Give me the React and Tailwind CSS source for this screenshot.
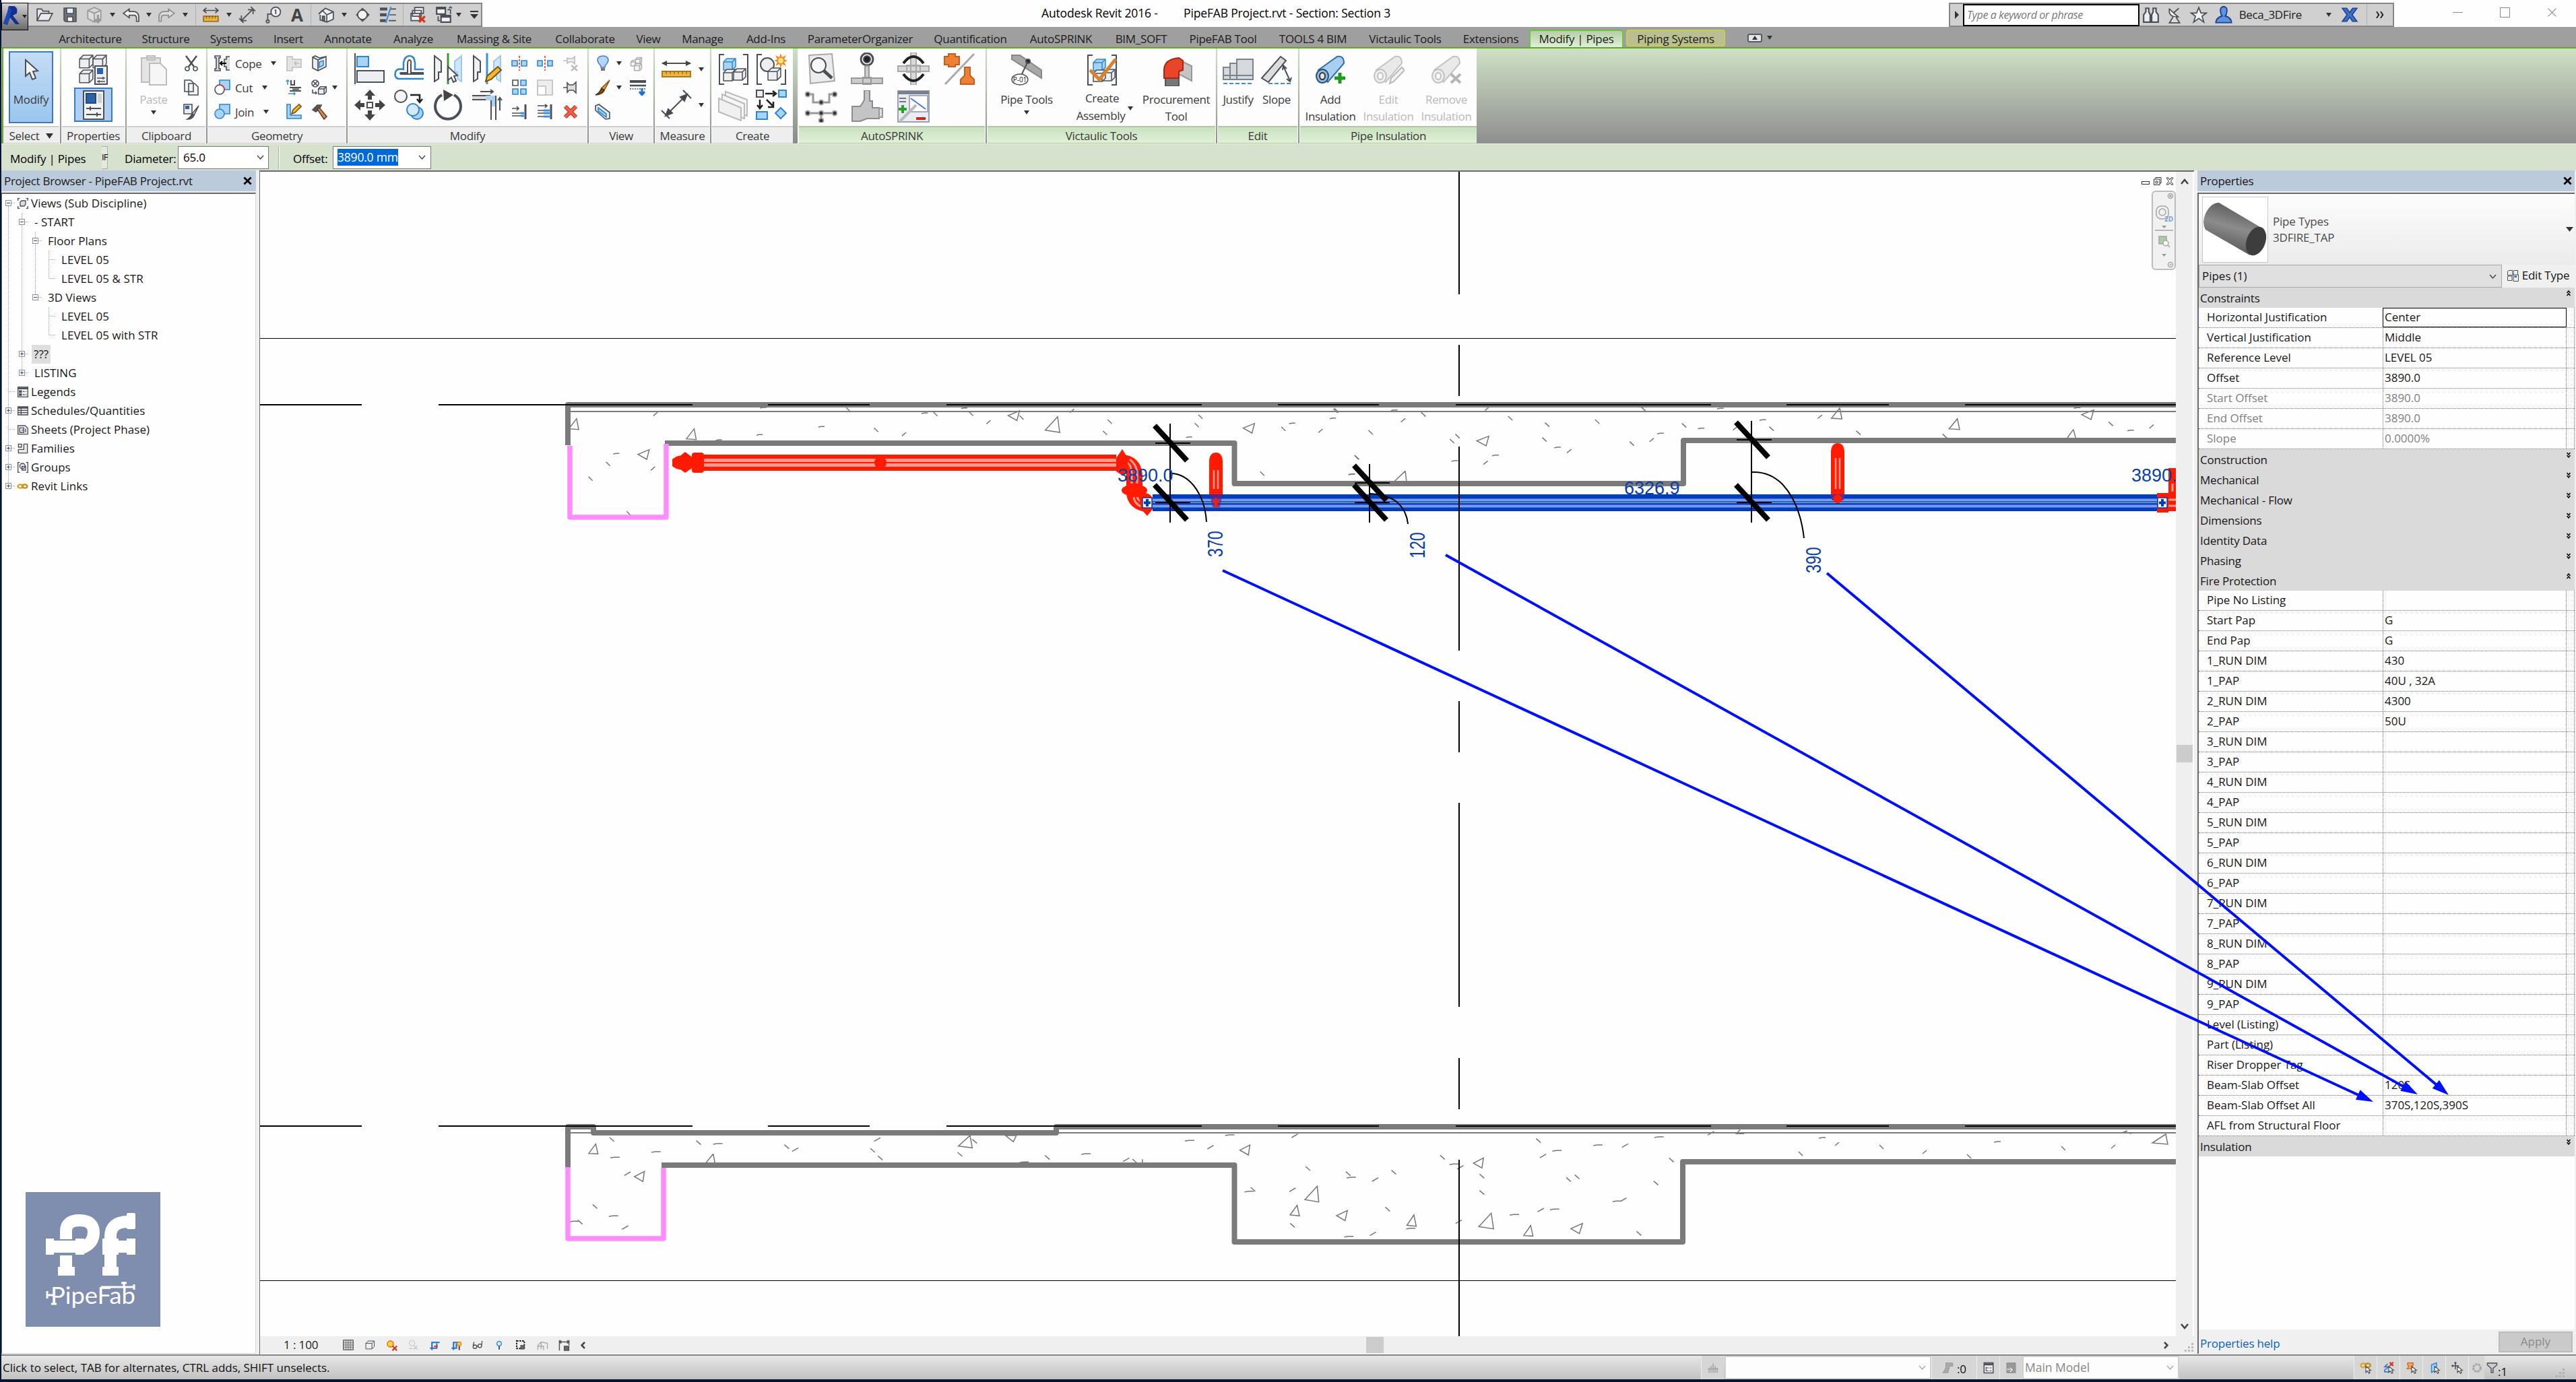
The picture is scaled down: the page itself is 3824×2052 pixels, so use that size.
import React from "react";

const D = "#4b4f57";
const B = "#2f86cf";
const LB = "#a9d3f5";

/* ---------- small helpers ---------- */
function Svg({ s = 24, w, h, vb, children }) {
  return (
    <svg width={w || s} height={h || s} viewBox={vb || "0 0 24 24"} fill="none" stroke={D} strokeWidth="1.6" className="shrink-0">
      {children}
    </svg>
  );
}
const Big = ({ children, s = 48, vb = "0 0 48 48" }) => (
  <svg width={s} height={s} viewBox={vb} fill="none" stroke={D} strokeWidth="2" className="shrink-0">
    {children}
  </svg>
);
const Arrow = ({ className = "" }) => (
  <svg width="8" height="6" viewBox="0 0 8 6" className={"shrink-0 " + className}>
    <path d="M0 0H8L4 6Z" fill="#333" />
  </svg>
);
const Chevron = ({ color = "#444" }) => (
  <svg width="11" height="7" viewBox="0 0 11 7" fill="none" stroke={color} strokeWidth="1.4" className="shrink-0">
    <path d="M1 1L5.500 6L10 1" />
  </svg>
);
const Close = ({ s = 14, color = "#000", sw = 3 }) => (
  <svg width={s} height={s} viewBox="0 0 14 14" stroke={color} strokeWidth={sw} className="shrink-0">
    <path d="M1.500 1.500L12.500 12.500M12.500 1.500L1.500 12.500" />
  </svg>
);
const Cube = ({ x = 0, y = 0, f = "#eceef1", c = D, k = 1 }) => (
  <g transform={`translate(${x} ${y}) scale(${k})`} fill={f} stroke={c} strokeWidth={1.5 / k} strokeLinejoin="round">
    <path d="M1 6L6 1H19V13L14 18H1Z" />
    <path d="M1 6H14V18M14 6L19 1" fill="none" />
  </g>
);

/* ---------- title bar ---------- */
const Q = ({ w, children }) => <div className={"flex h-full shrink-0 items-center justify-center " + w}>{children}</div>;
const Sep = () => <div className="h-full w-px shrink-0 bg-[#b2b2b2]" />;

function QuickAccess() {
  return (
    <div className="mt-1 flex h-[36px] w-[674px] items-center border-2 border-l-0 border-[#868686] bg-[#d0d0d0]">
      <Q w="w-[48px]"><Svg s={26}><path d="M2 20V4H8L10 7H18V10M2 20L7 10H23L18 20Z" fill="#e8eaed" /></Svg></Q>
      <Q w="w-[28px]"><Svg s={24}><path d="M3 2H21V22H5L3 20Z" fill="#6d727b" /><path d="M7 2H17V10H7Z" fill="#e9f1fa" /><path d="M8 15H16V22H8Z" fill="#fff" /></Svg></Q>
      <Q w="w-[44px]"><Svg s={26}><path d="M12 2L21 6V17L12 22L3 17V6Z M3 6L12 10L21 6M12 10V22" stroke="#999" fill="#dcdcdc" /><path d="M17 12V22M13 18L17 22L21 18" stroke="#999" strokeWidth="3" /></Svg></Q>
      <Q w="w-[10px]"><Arrow /></Q>
      <Q w="w-[44px]"><Svg s={26}><path d="M10 4L2 10L10 16V12.500H17Q20 13 20 17V21H23V14Q22 7.500 16 7.500H10Z" fill="#f2f2f2" /></Svg></Q>
      <Q w="w-[10px]"><Arrow /></Q>
      <Q w="w-[44px]"><Svg s={26}><path d="M14 4L22 10L14 16V12.500H7Q4 13 4 17V21H1V14Q2 7.500 8 7.500H14Z" fill="#ddd" stroke="#8c8c8c" /></Svg></Q>
      <Q w="w-[10px]"><Arrow /></Q>
      <Q w="w-[10px]" /><Sep />
      <Q w="w-[44px]"><Svg s={26}><path d="M2 6H22M6 2.500L2 6L6 9.500M18 2.500L22 6L18 9.500" /><path d="M2 14H22V21H2Z" fill="#e9b23c" stroke="#9a6a10" /><path d="M6 14V17M10 14V17M14 14V17M18 14V17" stroke="#7a5010" strokeWidth="1" /></Svg></Q>
      <Q w="w-[10px]"><Arrow /></Q>
      <Q w="w-[44px]"><Svg s={26}><path d="M4 20L20 4M13 5H20M20 4V11M4 13V20H11M1 17L7 23M17 1L23 7" /></Svg></Q>
      <Q w="w-[32px]"><Svg s={26}><circle cx="16" cy="8" r="6.500" fill="#f3f3f3" /><path d="M16 5V11M14.500 6L16 5M10 11H5V20" /><circle cx="5" cy="21" r="2" /></Svg></Q>
      <Q w="w-[40px]"><span className="text-[26px] font-bold leading-none text-[#444]">A</span></Q>
      <Sep />
      <Q w="w-[44px]"><Svg s={26}><path d="M2 11L11 3L22 8V18L13 22L4 19V12" fill="#eceef1" /><path d="M2 11L7 6L13 12V22M13 12L22 8" /><path d="M7 14H10V20.500L7 19.500Z" fill="#6d727b" /></Svg></Q>
      <Q w="w-[10px]"><Arrow /></Q>
      <Q w="w-[44px]"><Svg s={26}><path d="M3 12L12 2V22Z M12 2L22 12L12 22Z" fill="#555" stroke="none" /><circle cx="12" cy="12" r="6.500" fill="#f3f3f3" /></Svg></Q>
      <Q w="w-[32px]"><Svg s={26}><path d="M1 4H11M1 12H10M1 20H9" strokeWidth="4" /><path d="M15 4H23M14 12H23M13 20H23" strokeWidth="1.500" /><path d="M16 1L9 23" stroke="#3b8fe0" strokeWidth="2" /></Svg></Q>
      <Q w="w-[6px]" /><Sep />
      <Q w="w-[44px]"><Svg s={26}><path d="M7 2H19V10H7Z M4 6H16V14H4Z M2 10H14V20H2Z" fill="#eee" /><path d="M13 14L21 22M21 14L13 22" stroke="#d9331c" strokeWidth="3" /></Svg></Q>
      <Q w="w-[32px]"><Svg s={26}><path d="M2 2H14V11H2Z M8 13H21V22H8Z M2 3.500H14M8 15H21" fill="#f3f3f3" strokeWidth="2" /><path d="M17 5H21V11M4 14V20H7M19 3L21 1L23 3" /></Svg></Q>
      <Q w="w-[12px]"><Arrow /></Q>
      <Q w="w-[34px]"><svg width="14" height="12" viewBox="0 0 14 12"><path d="M1 0H13V2H1Z M1 5H13L7 12Z" fill="#333" /></svg></Q>
    </div>
  );
}

function TitleBar() {
  return (
    <div className="flex h-[40px] shrink-0 items-start bg-[#fefefe]">
      <div className="z-10 mt-1 flex h-[41px] w-[40px] shrink-0 items-center border border-black bg-linear-to-b from-[#d2d2d2] to-[#6c6c6c]">
        <svg width="38" height="38" viewBox="0 0 38 38">
          <path d="M10 3H18Q24 5 22 14L16 17L26 30H20L12 20L8 31L2 29L8 12Z" fill="#12308f" />
          <path d="M10 3L14 10L8 31L2 29L8 12Z" fill="#1d48bd" />
          <path d="M30 16H37L33.500 21Z" fill="#222" />
        </svg>
      </div>
      <QuickAccess />
      <div className="ml-[830px] flex h-[38px] w-[1347px] items-center text-[17.500px] tracking-[-0.15px] whitespace-pre text-black">
        <span className="w-[211px]">Autodesk Revit 2016 -</span>
        <span>PipeFAB Project.rvt - Section: Section 3</span>
      </div>
      <div className="mt-1 flex h-[36px] w-[661px] items-center border-2 border-[#868686] bg-[#d0d0d0]">
        <Q w="w-[19px]"><svg width="6" height="12"><path d="M0 0L6 6L0 12Z" fill="#333" /></svg></Q>
        <div className="flex h-[33px] w-[270px] items-center border-[2.500px] border-black bg-white pl-1 text-[16px] tracking-[-0.4px] text-[#777] italic">Type a keyword or phrase</div>
        <Q w="w-[35px]"><Svg s={26}><path d="M5 3H9V8L11 12V22H2V12L5 8Z M15 3H19V8L22 12V22H13V12L15 8Z M11 12H13" fill="#eceef1" strokeWidth="2" /></Svg></Q>
        <Q w="w-[35px]"><Svg s={26}><path d="M5 4Q3 15 17 15Z" fill="#f3f3f3" /><path d="M11 9L18 3M10 15L5 23H19L14 15" fill="#ddd" /></Svg></Q>
        <Q w="w-[36px]"><Svg s={26}><path d="M12 2L15 9.500H22.500L16.500 14L19 22L12 17L5 22L7.500 14L1.500 9.500H9Z" fill="#f3f3f3" /></Svg></Q>
        <Q w="w-[38px]"><Svg s={28}><path d="M12 1.500Q17 2 16 8Q15.500 12 14 13.500Q22 16 22 22H2Q2 16 10 13.500Q8.500 12 8 8Q7 2 12 1.500Z" fill="#5b93e8" stroke="#23407f" /></Svg></Q>
        <span className="w-[98px] pl-1 text-[17px] tracking-[-0.35px] text-[#222]">Beca_3DFire</span>
        <Q w="w-[64px]"><Arrow className="ml-4" /></Q>
        <Q w="w-[14px]"><Svg s={26}><path d="M2 3H8L12 9L16 3H22L15.500 12L22 21H16L12 15L8 21H2L8.500 12Z" fill="#3c6fd0" stroke="#24478f" /></Svg></Q>
        <Q w="w-[18px]" /><Sep />
        <Q w="w-[38px]"><svg width="12" height="10"><path d="M0 0H2L5.500 5L2 10H0L3 5Z M6 0H8L11.500 5L8 10H6L9 5Z" fill="#222" /></svg></Q>
      </div>
      <div className="ml-[87px] flex h-[36px] items-center gap-[55px]">
        <div className="h-px w-[15px] bg-[#888]" />
        <div className="h-[15px] w-[15px] border border-[#888]" />
        <Close s={15} color="#888" sw={1} />
      </div>
    </div>
  );
}

/* ---------- tabs ---------- */
const TABS = [
  ["Architecture", "w-[94px]"], ["Structure", "w-[70px]"], ["Systems", "w-[65px]"], ["Insert", "w-[44px]"], ["Annotate", "w-[73px]"],
  ["Analyze", "w-[61px]"], ["Massing & Site", "w-[119px]"], ["Collaborate", "w-[91px]"], ["View", "w-[37px]"], ["Manage", "w-[64px]"],
  ["Add-Ins", "w-[64px]"], ["ParameterOrganizer", "w-[156px]"], ["Quantification", "w-[111px]"], ["AutoSPRINK", "w-[98px]"],
  ["BIM_SOFT", "w-[80px]"], ["PipeFAB Tool", "w-[103px]"], ["TOOLS 4 BIM", "w-[104px]"], ["Victaulic Tools", "w-[110px]"], ["Extensions", "w-[84px]"],
];
function Tabs() {
  return (
    <div className="flex h-[32px] shrink-0 items-end border-b-2 border-[#5cab27] bg-[#9f9f9f] pl-[85px] text-[17px] tracking-[-0.3px] text-[#1c1c1c]">
      <div className="flex h-[26px] items-center gap-[30px] pt-[2px]">
        {TABS.map(([t, w]) => <div key={t} className={"flex shrink-0 justify-center whitespace-nowrap " + w}>{t}</div>)}
      </div>
      <div className="ml-[15px] flex h-[26px] w-[140px] items-center justify-center rounded-t-sm border-2 border-b-0 border-[#6fbf4a] bg-linear-to-b from-[#b4cfa5] to-[#dff0d6] whitespace-nowrap">Modify | Pipes</div>
      <div className="ml-[4px] mb-px flex h-[25px] w-[147px] items-center justify-center rounded-sm border-2 border-[#c9cd58] bg-[#b9bf8f] pt-[2px] whitespace-nowrap">Piping Systems</div>
      <div className="ml-[33px] flex h-[28px] items-center gap-[7px]">
        <div className="flex h-[13px] w-[22px] items-center justify-center rounded-[3px] border-2 border-[#555b66] bg-[#e6e6e6]"><svg width="8" height="6"><path d="M0 6H8L4 0Z" fill="#333" /></svg></div>
        <Arrow />
      </div>
    </div>
  );
}

/* ---------- ribbon ---------- */
function Panel({ w, title, green, last, children, arrow }) {
  return (
    <>
      <div className={"flex h-full shrink-0 flex-col bg-[#fdfdfd] " + w}>
        <div className="flex h-[115px] pt-1">{children}</div>
        <div className={"flex h-[26px] items-center justify-center gap-[10px] border-t-2 border-b pt-[2px] text-[17px] tracking-[-0.35px] text-[#3a3a3a] " + (green ? "border-[#b3c9a6] bg-linear-to-b from-[#cbe0c0] to-[#dff1d6]" : "border-[#cfcfcf] bg-[#eeeeee]")}>
          {title}
          {arrow && <svg width="11" height="8"><path d="M0 0H11L5.500 8Z" fill="#333" /></svg>}
        </div>
      </div>
      {!last && <div className="flex h-full w-[4px] shrink-0 justify-center bg-[#f5f8f3]"><div className="h-full w-[2px] bg-linear-to-b from-[#cfe0c5] to-[#8f8f8f]" /></div>}
    </>
  );
}
const Col = ({ w, children }) => <div className={"flex shrink-0 flex-col items-center " + w}>{children}</div>;
const S = ({ children }) => <div className="flex h-[36px] shrink-0 items-center justify-center">{children}</div>;
const L = ({ children }) => <div className="flex h-[53px] shrink-0 items-center justify-center">{children}</div>;
const Txt = ({ children, dim }) => <div className={"h-[25px] text-center text-[17px] leading-[25px] tracking-[-0.35px] whitespace-nowrap " + (dim ? "text-[#b9b9b9]" : "text-[#3a3a3a]")}>{children}</div>;

const Mirror = ({ pick }) => (
  <Big><path d="M4 4L14 12V28H10V38L4 42Z" fill="#f0f0f0" /><path d="M44 4L34 12V28H38V38L44 42Z" fill="#cfe6f8" stroke="#9cc8ea" /><path d="M24 0V46" stroke={pick ? "#3a9a2f" : "#3b8fe0"} strokeWidth="3" />{pick ? <path d="M24 20V40L29 36L32 43L36 41L33 34L38 33Z" fill="#fff" /> : <path d="M22 42L24 34L40 20L45 25L30 39Z" fill="#f5b833" stroke="#7a5010" />}</Big>
);
const Roll = ({ dim, children }) => (
  <Big>
    <path d="M6 24L34 4Q44 2 44 14L20 42Z" fill={dim ? "#e9e9e9" : "#a9cff0"} stroke={dim ? "#c2c2c2" : "#2f6ea8"} />
    <ellipse cx="12" cy="33" rx="9" ry="10" fill={dim ? "#eee" : "#8fb9df"} stroke={dim ? "#c2c2c2" : "#2c4f78"} />
    <ellipse cx="12" cy="33" rx="4" ry="5" fill={dim ? "#f8f8f8" : "#e8e8e8"} stroke={dim ? "#c2c2c2" : "#333"} />
    {children}
  </Big>
);

function Ribbon() {
  return (
    <div className="flex h-[142px] shrink-0 items-start border-b border-[#e8eee4] bg-linear-to-b from-[#cfe1c5] to-[#8f8f8f] pl-px">
      <div className="h-[141px] w-[2px] shrink-0 bg-[#5cab27]" />
      <div className="flex h-[141px]">
        <Panel w="w-[83px]" title="Select" arrow>
          <div className="ml-[8px] flex h-[107px] w-[66px] flex-col items-center border-2 border-[#3c79c4] bg-linear-to-b from-[#c4dcf5] to-[#9cc6ef] pt-2">
            <Big s={36} vb="0 0 36 36"><path d="M10 3V27L16 22L20 32L25 30L21 20L28 19Z" fill="#f4f4f4" /></Big>
            <div className="mt-[13px]"><Txt>Modify</Txt></div>
          </div>
        </Panel>
        <Panel w="w-[93px]" title="Properties">
          <Col w="w-full">
            <L><Big><Cube x={2} y={2} k={1.1} /><Cube x={22} y={2} k={1.1} /><Cube x={2} y={24} k={1.1} /><path d="M26 19H44V46H26Z" fill="#eceef1" /><path d="M29 22H38V31H29Z" fill="#2d62ab" stroke="none" /><path d="M29 37H41M29 42H41M38 35V39M32 40V44" strokeWidth="1.500" /></Big></L>
            <div className="mt-[1px] flex h-[51px] w-[57px] items-center justify-center border-2 border-[#3c79c4] bg-[#aecff2]">
              <svg width="34" height="46" viewBox="0 0 34 46" fill="none" stroke={D} strokeWidth="2"><path d="M2 2H32V44H2Z" fill="#f3f3f3" /><path d="M6 6H20V20H6Z" fill="#2d62ab" stroke="#1f4a86" /><path d="M23 6H29V20H23Z" fill="#cfd3d8" stroke="none" /><path d="M6 28H28M6 37H28M12 25V31M22 34V40" /></svg>
            </div>
          </Col>
        </Panel>
        <Panel w="w-[116px]" title="Clipboard">
          <Col w="w-[78px]">
            <div className="mt-1"><Big><path d="M6 6H34V42H6Z M14 3H26V9H14Z" fill="#e4e4e4" stroke="#bdbdbd" /><path d="M18 14H34L43 23V46H18Z" fill="#f6f6f6" stroke="#bdbdbd" /></Big></div>
            <div className="mt-[7px]"><Txt dim>Paste</Txt></div>
            <Arrow className="mt-1" />
          </Col>
          <Col w="w-[34px]">
            <S><Svg><path d="M4 1L16 17M20 1L8 17" strokeWidth="2.500" /><circle cx="6" cy="20" r="3" /><circle cx="18" cy="20" r="3" /></Svg></S>
            <S><Svg><path d="M2 1H11L15 5V18H2Z M8 6H17L22 11V23H8Z" fill="#f3f3f3" /></Svg></S>
            <S><Svg><path d="M1 1H13V15H1Z" fill="#eceef1" /><path d="M3 3H9V8H3Z" fill="#2d62ab" stroke="none" /><path d="M23 3L13 15L16 17Z" fill="#ddd" /><path d="M13 15L16 17Q14 23 6 23Q11 20 13 15Z" fill="#555" /></Svg></S>
          </Col>
        </Panel>
        <Panel w="w-[204px]" title="Geometry">
          <div className="flex w-[108px] flex-col pl-[9px]">
            {[["Cope", <Svg key="a"><path d="M1 1H9V4H7V20H9V23H1V20H3V4H1Z M23 2H18V6H15V17H18V22H23" fill="#ddd" /><path d="M18 12H9M12 9L9 12L12 15" stroke="#000" strokeWidth="2.200" /></Svg>],
              ["Cut", <Svg key="b"><path d="M8 1H23V15H8Z" fill={LB} stroke={B} /><circle cx="8" cy="15" r="7" fill="#fff" /><path d="M8 8Q15 9 15 15" stroke="#e8321c" /></Svg>],
              ["Join", <Svg key="c"><path d="M8 1H23V15H8Z" fill={LB} stroke={B} /><circle cx="8" cy="15" r="7" fill={LB} stroke={B} /></Svg>]].map(([t, i]) => (
              <div key={t} className="flex h-[36px] shrink-0 items-center gap-[7px]">{i}<Txt>{t}</Txt><Arrow className="ml-[7px]" /></div>
            ))}
          </div>
          <Col w="w-[38px]">
            <S><Svg><path d="M2 2H10V6H23V18H10V23H2Z M13 12H20M13 12L16 9M13 12L16 15" fill="#e4e4e4" stroke="#bdbdbd" /></Svg></S>
            <S><Svg><path d="M3 1V8M0.500 3L3 1L5.500 3" stroke="#3b8fe0" /><path d="M8 1V8H13V1M6 12H23M6 17H23M10 14.500H20" strokeWidth="2" /><path d="M4 21H14M12 19L14 21L12 23" stroke="#3b8fe0" /></Svg></S>
            <S><Svg><path d="M2 1V22H23V17H7V1Z" fill={LB} stroke={B} /><path d="M9 15L11 9L20 1L23 4L14 13Z" fill="#f5b833" stroke="#7a5010" /></Svg></S>
          </Col>
          <Col w="w-[38px]">
            <S><Svg><path d="M2 3L6 1L12 4L22 2V17L10 23L2 19Z" fill="#eceef1" /><path d="M2 3L10 7V23M10 7L22 2" /><path d="M12 10L18 8V15L12 18Z" fill={LB} stroke={B} /></Svg></S>
            <S><Svg><circle cx="6" cy="6" r="5" /><path d="M2.500 2.500L9.500 9.500M9.500 2.500L2.500 9.500M2 15V20H8M6 18L8 20L6 22" /><Cube x={10} y={10} k={0.65} /></Svg></S>
            <S><Svg><path d="M2 9L9 2H15L12 8L7 12Z" fill="#555" /><path d="M9 8L12 6L23 19L19 23Z" fill="#c98b5a" stroke="#6b4020" /></Svg></S>
          </Col>
          <div className="flex h-[72px] w-[16px] items-end pb-[15px]"><Arrow /></div>
        </Panel>
        <Panel w="w-[354px]" title="Modify">
          <Col w="ml-[3px] w-[58px]">
            <L><Big><path d="M2 0V46" /><path d="M5 5H22V20H5Z" fill={LB} stroke={B} /><path d="M5 26H45V43H5Z" fill="#eceef1" /></Big></L>
            <L><Big><path d="M24 1L32 10H27V16H21V10H16Z M24 47L32 38H27V32H21V38H16Z M1 24L10 16V21H16V27H10V32Z M47 24L38 16V21H32V27H38V32Z" fill="#444" stroke="none" /><path d="M20 20H28V28H20Z" fill="#fff" /></Big></L>
          </Col>
          <Col w="w-[58px]">
            <L><Big><path d="M46 38H8Q2 36 4 28Q6 22 16 24V14Q18 4 25 4Q32 4 33 14V24H46" stroke={B} strokeWidth="2.500" /><path d="M46 31H12Q10 29 12 29H22V16Q22 10 25 10Q28 11 27 16V29H46" /></Big></L>
            <L><Big><circle cx="12" cy="11" r="9" fill="#f3f3f3" /><path d="M26 9H40V19M36 15L40 20L44 15" stroke="#222" strokeWidth="2.500" /><circle cx="36" cy="36" r="9" fill={LB} stroke={B} /><circle cx="30" cy="31" r="9" fill="#d4e9fa" stroke={B} /></Big></L>
          </Col>
          <Col w="w-[58px]">
            <L><Mirror pick /></L>
            <L><Big><path d="M15 9A19 19 0 1 0 33 9" strokeWidth="4" /><path d="M17 1L32 9L18 18Z" fill="#444" stroke="none" /></Big></L>
          </Col>
          <Col w="w-[58px]">
            <L><Mirror /></L>
            <L><Big><path d="M14 4H32M29 1L33 4L29 7M43 32V14M40 17L43 13L46 17" /><path d="M2 10H28V16H2" fill="#ddd" /><path d="M22 10H37V26H30V17H22Z" fill={LB} stroke="none" /><path d="M37 10V46M30 17V46" /></Big></L>
          </Col>
          <Col w="w-[38px]">
            <S><Svg><path d="M1 8H9V16H1Z M15 8H23V16H15Z" fill={LB} stroke={B} /><path d="M12 1V23" stroke="#e8321c" strokeDasharray="3 2" /></Svg></S>
            <S><Svg><path d="M2 1H10V9H2Z" fill="#fff" /><path d="M14 1H22V9H14Z M2 14H10V22H2Z M14 14H22V22H14Z" fill={LB} stroke={B} /></Svg></S>
            <S><Svg><path d="M1 7H10M8 4L11 7L8 10M1 14H14M1 18H14" /><path d="M14 14H19M14 18H19" stroke="#3b8fe0" strokeWidth="3" /><path d="M21 1V23" strokeWidth="3" /></Svg></S>
          </Col>
          <Col w="w-[38px]">
            <S><Svg><path d="M1 8H8V16H1Z M16 8H23V16H16Z" fill={LB} stroke={B} /><path d="M12 1V23" stroke="#e8321c" strokeDasharray="3 2" /></Svg></S>
            <S><Svg><path d="M1 1H23V23H1Z" stroke="#bdbdbd" fill="#eee" /><path d="M1 10H13V23H1Z" stroke="#bdbdbd" fill="#fff" /></Svg></S>
            <S><Svg><path d="M1 3H14M12 1L15 3L12 6M1 10H10M1 14H10M1 19H10" /><path d="M10 10H19M10 14H19M10 19H19" stroke="#3b8fe0" strokeWidth="3" /><path d="M21 1V23" strokeWidth="3" /></Svg></S>
          </Col>
          <Col w="w-[38px]">
            <S><Svg><path d="M1 8H7M7 4V12L10 10H15L18 13V2L15 5H10Z" fill="#eee" stroke="#bdbdbd" /><path d="M13 15L22 23M22 15L13 23" stroke="#bdbdbd" strokeWidth="2.500" /></Svg></S>
            <S><Svg><path d="M1 12H7M7 5V19L10 16H16L20 20V4L16 8H10Z" fill="#ddd" /></Svg></S>
            <S><Svg><path d="M4 4L20 20M20 4L4 20" stroke="#c8311c" strokeWidth="6" /><path d="M4 4L20 20M20 4L4 20" stroke="#f0604c" strokeWidth="3.500" /></Svg></S>
          </Col>
        </Panel>
        <Panel w="w-[94px]" title="View">
          <Col w="ml-[8px] w-[24px]">
            <S><Svg><path d="M12 1Q20 1 20 8Q19 12 15 16V18H9V16Q5 12 4 8Q4 1 12 1Z" fill="#b5d4fa" stroke="#4f7fc4" /><path d="M9 19H15V23H9Z" fill="#777" stroke="none" /></Svg></S>
            <S><Svg><path d="M22 1L10 13L14 16Z" fill="#f0a13a" stroke="#8a5a20" /><path d="M10 13L14 16Q12 22 1 23Q7 20 10 13Z" fill="#7b4a24" stroke="#553010" /></Svg></S>
            <S><Svg><path d="M1 3L6 1L22 13V22L16 23L1 10Z" fill="#e6eef7" /><path d="M5 6L17 15V20L5 11Z" fill={LB} stroke={B} /></Svg></S>
          </Col>
          <Col w="w-[24px]"><S><Arrow /></S><S><Arrow /></S></Col>
          <Col w="w-[32px]">
            <S><Svg><g opacity=".45"><Cube x={1} y={7} k={0.5} /><Cube x={8} y={3} k={0.5} /><Cube x={6} y={12} k={0.6} /></g></Svg></S>
            <S><Svg><path d="M0 3H24" strokeWidth="4" /><path d="M0 9H24" strokeWidth="2.500" /><path d="M0 14H24" strokeDasharray="2 1.500" /><path d="M18 13V22M14 18L18 23L22 18" stroke="#1f6fd6" strokeWidth="3" /></Svg></S>
          </Col>
        </Panel>
        <Panel w="w-[80px]" title="Measure">
          <Col w="ml-[7px] w-[48px]">
            <L><Big><path d="M3 15H45" /><path d="M2 15L10 11V19Z M46 15L38 11V19Z" fill="#444" stroke="none" /><path d="M3 27H45V35H3Z" fill="#efb63f" stroke="#a97a1e" /><path d="M9 27V31M15 27V31M21 27V31M27 27V31M33 27V31M39 27V31" stroke="#7a5010" strokeWidth="1" /></Big></L>
            <L><Big><path d="M10 38L38 10M2 32L14 44M34 2L46 14" /><path d="M8 40L18 36L12 30Z M40 8L30 12L36 18Z" fill="#444" /></Big></L>
          </Col>
          <Col w="w-[25px]"><L><Arrow /></L><L><Arrow /></L></Col>
        </Panel>
        <Panel w="w-[120px]" title="Create" last>
          <Col w="ml-[3px] w-[58px]">
            <L><Big><path d="M10 2H3V46H10M38 2H45V46H38" /><Cube x={8} y={7} f={LB} c={B} /><Cube x={8} y={23} /><Cube x={23} y={22} /></Big></L>
            <L><Big><path d="M12 4L44 16V40L12 28Z" fill="#f5f5f5" stroke="#bbb" /><path d="M7 8L40 22V44L7 32Z" fill="#f5f5f5" stroke="#bbb" /><path d="M2 14L35 28V47L2 34Z" fill="#f0f0f0" stroke="#bbb" /></Big></L>
          </Col>
          <Col w="w-[54px]">
            <L><Big><path d="M10 2H3V46H10M38 46H45V24" /><circle cx="18" cy="17" r="10" fill="#eceef1" /><Cube x={18} y={21} k={1.050} /><path d="M38 0L40 6L46 3L43 9L48 11L43 13L46 19L40 16L38 22L36 16L30 19L33 13L28 11L33 9L30 3L36 6Z" fill="#f58a1f" stroke="none" /><circle cx="38" cy="11" r="4" fill="#ffe27a" stroke="none" /></Big></L>
            <L><Big><path d="M2 2H12V12H2Z" fill="#eee" /><path d="M35 2H46V12H35Z M2 34H18V45H2Z" fill={LB} stroke={B} /><path d="M38 28L46 36L38 44L30 36Z" fill={LB} stroke={B} /><path d="M15 7H30M26 3L31 7L26 11M7 16V28M3 24L7 29L11 24M17 16L27 26M27 19V27H19" stroke="#222" strokeWidth="2.500" /></Big></L>
          </Col>
        </Panel>
        <div className="h-full w-[9px] border-r-2 border-[#f5f8f3] bg-linear-to-b from-[#cfe0c5] to-[#8a8a8a]" />
        <Panel w="w-[276px]" title="AutoSPRINK" green>
          <div className="grid h-full grid-cols-[66px_70px_68px_68px] grid-rows-[52px_59px] items-center justify-items-center">
            <Big><path d="M6 4L40 2L44 42L8 46Z" fill="#ececec" stroke="#aaa" /><circle cx="20" cy="19" r="11" fill="#f7f7f7" /><path d="M28 27L40 38" strokeWidth="5" /></Big>
            <Big><circle cx="24" cy="10" r="9" strokeWidth="3" /><circle cx="24" cy="10" r="5" fill="#222" /><path d="M21 20H27V38H21Z M1 38H47V46H1Z M18 37H30V47H18Z" fill="#ccc" stroke="#999" /></Big>
            <Big><path d="M20 0H28V48H20Z M1 20H47V28H1Z M14 19H34V29H14Z" fill="#d8d8d8" stroke="#aaa" /><path d="M9 16Q24 -4 39 16M9 32Q24 52 39 32" stroke="#222" strokeWidth="4" /></Big>
            <Big><path d="M8 2H18V6H24V18H18V21H8V18H2V6H8Z" fill="#f07f36" stroke="#c45f1e" /><path d="M32 22H40V34L46 40V47H26V40L32 34Z" fill="#f07f36" stroke="#c45f1e" /><path d="M46 2L3 47" stroke="#aaa" strokeWidth="3" /></Big>
            <Big><path d="M4 6H12V18H36V6H44M4 34H44M24 34V46" stroke="#999" strokeWidth="3" /><g fill="#333" stroke="#aaa"><circle cx="4" cy="6" r="3.500" /><circle cx="44" cy="6" r="3.500" /><circle cx="24" cy="18" r="3.500" /><circle cx="4" cy="34" r="3.500" /><circle cx="24" cy="34" r="3.500" /><circle cx="44" cy="34" r="3.500" /><circle cx="24" cy="45" r="3.500" /></g></Big>
            <Big><path d="M20 0H28V16H32V26H42V42H24L14 46H2V24H14L18 18L20 14Z" fill="#c4c4c6" stroke="#8b8b8d" /><path d="M42 27H47V40H42Z" fill="#ddd" stroke="#999" /></Big>
            <Big><path d="M1 1H47V47H1Z" fill="#e9edf3" stroke="#9aa2b0" /><path d="M1 1H47V6H1Z" fill="#7a8090" stroke="none" /><path d="M18 8H45V32H18Z" fill="#fff" stroke="#aab" /><path d="M20 12L42 28" stroke="#4a78d8" /><path d="M3 12H13M3 17H13" strokeWidth="1.500" /><path d="M8 22V34M2 28H14" stroke="#2aa02a" strokeWidth="4" /><path d="M28 22L4 46" stroke="#bbb" strokeWidth="4" /><path d="M28 42H42" stroke="#c8281c" strokeWidth="4" /></Big>
          </div>
        </Panel>
        <Panel w="w-[338px]" title="Victaulic Tools" green>
          <Col w="w-[116px]">
            <div className="mt-1"><Big><path d="M2 2H14L46 24V36L2 8Z" fill="#a8a8a8" stroke="#888" /><circle cx="26" cy="11" r="3" fill="#111" /><path d="M26 11L16 32" /><ellipse cx="14" cy="38" rx="12" ry="8" fill="#fff" strokeWidth="1.500" /><text x="14" y="42" textAnchor="middle" fontSize="10" stroke="none" fill="#222">P-01</text></Big></div>
            <div className="mt-[7px]"><Txt>Pipe Tools</Txt></div>
            <Arrow className="mt-1" />
          </Col>
          <Col w="w-[108px]">
            <div className="mt-1"><Big><path d="M10 2H3V46H10M38 2H45V46H38" /><Cube x={10} y={7} f={LB} c={B} /><Cube x={24} y={22} /><Cube x={10} y={23} /><path d="M6 24L20 38L44 8" stroke="#d9822b" strokeWidth="5" /></Big></div>
            <div className="mt-[5px]"><Txt>Create</Txt></div>
            <div className="flex items-center gap-[4px] pl-2"><Txt>Assembly</Txt><Arrow className="mb-5" /></div>
          </Col>
          <Col w="w-[112px]">
            <div className="mt-1"><Big><path d="M8 34H28V48H8Z" fill="#777" stroke="#555" /><path d="M30 10L47 18V40L28 30Z" fill="#c4c4c4" stroke="#999" /><path d="M6 36V24Q6 8 28 6L34 10V24L28 26V36Z" fill="#e8452a" stroke="#a52713" /></Big></div>
            <div className="mt-[7px]"><Txt>Procurement</Txt><Txt>Tool</Txt></div>
          </Col>
        </Panel>
        <Panel w="w-[118px]" title="Edit" green>
          <Col w="w-[60px]">
            <div className="mt-1"><Big><path d="M2 38V20H12V14H22V8H46V38Z" fill="#d5d8dd" stroke="#7c828c" /><path d="M2 32H46M12 20V38M22 14V38" stroke="#7c828c" /><path d="M2 44H46" stroke="#3b8fe0" strokeDasharray="6 3" /></Big></div>
            <div className="mt-[7px]"><Txt>Justify</Txt></div>
          </Col>
          <Col w="w-[54px]">
            <div className="mt-1"><Big><path d="M2 36L30 4L38 10L12 42Z" fill="#dcdcdc" /><path d="M34 18L44 40M33 24L34 17L39 22M39 37L44 41L46 35" /><path d="M12 44H46" stroke="#3b8fe0" strokeDasharray="6 3" /></Big></div>
            <div className="mt-[7px]"><Txt>Slope</Txt></div>
          </Col>
        </Panel>
        <Panel w="w-[262px]" title="Pipe Insulation" green last>
          <Col w="ml-[2px] w-[86px]"><div className="mt-1"><Roll><path d="M38 28V44M30 36H46" stroke="#1d9a1d" strokeWidth="5" /></Roll></div><div className="mt-[7px]"><Txt>Add</Txt><Txt>Insulation</Txt></div></Col>
          <Col w="w-[86px]"><div className="mt-1"><Roll dim><path d="M26 44L28 36L44 20L48 24L32 41Z" fill="#f3f3f3" stroke="#b9b9b9" /></Roll></div><div className="mt-[7px]"><Txt dim>Edit</Txt><Txt dim>Insulation</Txt></div></Col>
          <Col w="w-[86px]"><div className="mt-1"><Roll dim><path d="M31 30L45 43M45 30L31 43" stroke="#b5b5b5" strokeWidth="4" /></Roll></div><div className="mt-[7px]"><Txt dim>Remove</Txt><Txt dim>Insulation</Txt></div></Col>
        </Panel>
      </div>
    </div>
  );
}

/* ---------- options bar ---------- */
function OptionsBar() {
  return (
    <div className="flex h-[39px] shrink-0 items-center bg-[#d6e1ce] pl-[13px] text-[17px] tracking-[-0.2px] text-black">
      <span className="w-[136px] pt-1">Modify | Pipes</span>
      <div className="flex h-[34px] w-[9px] items-center border-y border-r border-[#a9b0a4] bg-[#e4e9e0] text-[13px] tracking-[-1px] whitespace-nowrap">IF</div>
      <span className="ml-[25px] w-[79px] pt-1">Diameter:</span>
      <div className="flex h-[34px] w-[135px] items-center justify-between border border-[#7a7a7a] bg-white pr-[6px] pl-[7px]">65.0<Chevron /></div>
      <div className="ml-[14px] h-[34px] w-[2px] border-r border-white bg-[#a9b0a4]" />
      <span className="ml-[20px] w-[59px] pt-1">Offset:</span>
      <div className="flex h-[34px] w-[146px] items-center justify-between border border-[#7a7a7a] bg-white pr-[7px] pl-[6px]"><span className="h-[25px] bg-[#0068d9] text-[17.500px] leading-[25px] tracking-[-0.2px] whitespace-nowrap text-white">3890.0 mm</span><Chevron /></div>
    </div>
  );
}

/* ---------- project browser ---------- */
function Cell({ k }) {
  const box = k[0] === "+" || k[0] === "-";
  const last = k[1] === "e";
  return (
    <svg width="20" height="28" viewBox="0 0 20 28" className="shrink-0" fill="none">
      <g stroke="#9a9a9a" strokeDasharray="1 1">
        {k !== " " && k !== "-s" && <path d="M9.500 0V14" />}
        {k !== " " && k !== "l" && !last && <path d="M9.500 14V28" />}
        {k !== " " && k !== "v" && <path d="M10 13.500H20" />}
      </g>
      {box && <g stroke="#8d949c"><rect x="5.500" y="9.500" width="8" height="8" fill="#fff" /><path d="M7 13.500H12" stroke="#2a4b94" />{k[0] === "+" && <path d="M9.500 11V16" stroke="#2a4b94" />}</g>}
    </svg>
  );
}
const TI = {
  views: <Svg w={16} h={16}><path d="M1 6V1H5M19 1H23V6M23 18V23H19M5 23H1V18" strokeWidth="2" /><path d="M6 9L9 6H18V14L15 18H6Z" fill="#ddd" strokeWidth="2" /></Svg>,
  legend: <Svg w={16} h={16}><path d="M1 1H23V23H1Z" fill="#f3f3f3" strokeWidth="2" /><path d="M1 4H23" strokeWidth="4" /><path d="M4 9H9V13H4Z M4 16H9V20H4Z" fill="#555" /><path d="M12 11H20M12 18H20" strokeWidth="2" strokeDasharray="4 2" /></Svg>,
  sched: <Svg w={16} h={16}><path d="M1 3H23V21H1Z M1 11H23M1 16H23M8 6V21" fill="#e8e8e8" strokeWidth="2" /><path d="M1 5H23" strokeWidth="4" /></Svg>,
  sheet: <Svg w={16} h={16}><path d="M1 3H17L23 9V22H1Z" fill="#eee" strokeWidth="2" /><path d="M5 8H14V18H5Z M9 13H14M18 10V18" strokeWidth="2" /></Svg>,
  fam: <Svg w={16} h={16}><path d="M2 2H9V9H2Z M14 2H22V22H2V14H14Z" fill="#e8e8e8" strokeWidth="2" /></Svg>,
  group: <Svg w={16} h={16}><path d="M5 1H1V23H5M19 1H23V23H19" strokeWidth="2" /><circle cx="11" cy="9" r="6" fill="#ddd" strokeWidth="2" /><path d="M10 10H18V18H10Z" strokeWidth="2" /></Svg>,
  link: <Svg w={17} h={16}><ellipse cx="7" cy="12" rx="5.500" ry="4" stroke="#e0a21e" strokeWidth="3.500" /><ellipse cx="17" cy="12" rx="5.500" ry="4" stroke="#c98812" strokeWidth="3.500" /></Svg>,
};
const TREE = [
  [["-s"], "Views (Sub Discipline)", "views"], [["v", "-"], "- START"], [["v", "v", "-"], "Floor Plans"],
  [["v", "v", "v", "t"], "LEVEL 05"], [["v", "v", "v", "l"], "LEVEL 05 & STR"], [["v", "v", "-e"], "3D Views"],
  [["v", "v", " ", "t"], "LEVEL 05"], [["v", "v", " ", "l"], "LEVEL 05 with STR"], [["v", "+"], "???"], [["v", "+e"], "LISTING"],
  [["t"], "Legends", "legend"], [["+"], "Schedules/Quantities", "sched"], [["t"], "Sheets (Project Phase)", "sheet"],
  [["+"], "Families", "fam"], [["+"], "Groups", "group"], [["+e"], "Revit Links", "link"],
];
function Browser() {
  return (
    <div className="flex h-full w-[378px] shrink-0 flex-col bg-[#eeeeee]">
      <div className="flex h-[31px] items-center justify-between bg-[#bccbdc] pr-[6px] pl-1 text-[17px] tracking-[-0.3px] text-[#1b1b1b]">
        <span>Project Browser - PipeFAB Project.rvt</span><Close s={13} />
      </div>
      <div className="mt-[2px] flex-1 border border-t-2 border-[#d9d9d9] border-t-[#6a6a6a] border-l-[#6a6a6a] bg-[#fefefe] text-[17px] tracking-[0.05px] text-[#161616]">
        {TREE.map(([c, t, i], n) => (
          <div key={n} className="flex h-[28px] items-center">
            {c.map((k, j) => <Cell key={j} k={k} />)}
            {i && <div className="flex w-[21px] justify-center">{TI[i]}</div>}
            <span className={"flex h-[28px] items-center whitespace-nowrap " + (i ? "pl-[2px]" : t === "???" ? "ml-1 bg-[#dedede] px-[3px]" : "pl-[8px]")}>{t}</span>
          </div>
        ))}
      </div>
      <div className="h-px" />
    </div>
  );
}

/* ---------- pipefab badge ---------- */
function Logo() {
  return (
    <div className="absolute top-[1770px] left-[38px] h-[200px] w-[200px] bg-[#7f8dae]">
      <svg width="200" height="200" viewBox="0 0 200 200" fill="#fff">
        <path d="M60 70V58Q60 42 80 42Q101 42 101 60Q101 76 84 83" fill="none" stroke="#fff" strokeWidth="18" />
        <path d="M30 69H42V72H74V69H87V93H74V90H42V93H30Z" />
        <path d="M51 70V72H69V70Z" fill="#7f8dae" />
        <path d="M51 94H69V111H73V124H48V111H51Z" />
        <path d="M126 112V66Q126 44 152 44" fill="none" stroke="#fff" strokeWidth="18" />
        <rect x="150" y="31" width="13" height="24" rx="2" />
        <path d="M114 69H138V72H150V69H163V93H150V90H138V93H114Z" />
        <rect x="114" y="111" width="24" height="13" rx="1" />
        <path d="M32 147V158M31 153H42M38 166H46M112 141H162M146 133V142M142 135H150M161 137V145" stroke="#fff" strokeWidth="3" />
        <text x="37" y="166" fontFamily="Lato, sans-serif" fontSize="35" textLength="126" lengthAdjust="spacingAndGlyphs">PipeFab</text>
      </svg>
    </div>
  );
}

/* ---------- section drawing ---------- */
const marks = (bs, fs, ds) =>
  bs.map(([x, y]) => `M${x - 4} ${y - 9}l8 18`).join("") + fs.map(([x, y]) => `M${x + 4} ${y - 8}l-8 16`).join("") + ds.map(([x, y]) => `M${x - 6} ${y + 3}l5 -3h7`).join("");
const tris = (a, b, c) =>
  a.map(([x, y]) => `M${x} ${y}l4 48l-19 -3Z`).join("") + b.map(([x, y]) => `M${x} ${y}l4 70l-28 -10Z`).join("") + c.map(([x, y]) => `M${x} ${y}l-5 43l-17 -22Z`).join("");

const UP_A = marks(
  [[574, 115], [743, 134], [812, 133], [910, 150], [628, 205], [1081, 168], [1072, 218], [1257, 146], [1250, 184], [1418, 200], [1377, 400], [1521, 118], [1560, 328], [108, 356], [74, 422], [148, 577]],
  [[200, 134], [846, 170], [682, 224], [1008, 120], [195, 377], [1490, 209]],
  [[409, 105], [722, 130], [522, 190], [402, 226], [323, 249], [799, 107], [1235, 236], [1514, 152], [1435, 175], [124, 310], [1550, 402]]
) + tris([[47, 155], [275, 200]], [[980, 146]], [[906, 120], [1362, 176], [188, 293]]);
const UP_B = marks(
  [[3, 120], [163, 136], [321, 153], [479, 168], [388, 182], [67, 216], [215, 255], [225, 233], [383, 248], [542, 266], [637, 185], [563, 112], [796, 200], [954, 218], [42, 327], [1111, 232], [1413, 178]],
  [[126, 162], [279, 110], [578, 250], [428, 299], [276, 351], [884, 146], [1487, 190], [730, 198]],
  [[110, 116], [594, 220], [407, 282], [294, 317], [220, 342], [668, 197], [780, 160], [703, 109], [1352, 106], [1449, 206], [33, 401]]
) + "M130 388L111 432M130 388L132 432" + tris([[920, 108], [1134, 155]], [], [[282, 233], [1382, 116]]) + "M1345 203L1334 240M1345 203L1349 240";
const LOW = marks(
  [[78, 156], [190, 170], [304, 188], [415, 204], [425, 238], [547, 164], [528, 222], [641, 236], [754, 252], [56, 454], [37, 524], [978, 285], [1030, 308], [907, 378], [1089, 302], [1203, 319], [1152, 235], [1276, 161], [1315, 334], [1326, 322], [1428, 350], [1203, 392], [1081, 466], [958, 538], [1406, 574], [1448, 247]],
  [[97, 308], [314, 201], [420, 156], [742, 246], [851, 190], [960, 139], [1064, 334], [957, 380], [1281, 229], [1387, 183], [1385, 424], [1278, 470], [1172, 522], [1061, 576], [94, 548], [1498, 128], [1174, 280]],
  [[134, 210], [214, 174], [81, 235], [79, 496], [28, 520], [610, 256], [690, 219], [824, 160], [876, 135], [1033, 324], [901, 386], [1166, 265], [1299, 205], [1352, 180], [1431, 144], [1377, 430], [1296, 466], [1244, 490], [1110, 551], [1030, 587]]
).replaceAll("l8 18", "l6 18") + "M56 176l3 44l-12 -2ZM540 138l3 55l-18 -8ZM596 166L586 138L600 138ZM208 220L199 258M208 220L210 258M119 298l-2 45l-11 -22ZM902 180l-2 45l-11 -22ZM1204 238l-2 45l-11 -22ZM989 364l2 70l-18 -10ZM963 449l3 47l-12 -4ZM1028 472l-3 45l-11 -22ZM1114 492l3 50l-12 -4ZM1214 484l3 70l-19 -10ZM1265 539l3 47l-12 -2ZM1332 530l-4 45l-11 -22ZM763 258V244M1536 112L1531 130H1541";
const FAR = [[2670, 1710], [2790, 1700], [2920, 1714], [3060, 1702]].map(([x, y]) => `M${x} ${y}l6 6`).join("") + [[2730, 1696], [2860, 1708], [3140, 1700]].map(([x, y]) => `M${x} ${y}l-6 5`).join("") + "M2700 1690l5 -1h5M2960 1696l5 -1h5M3150 1682l8 -3M3154 1681l10 2M3215 1684L3195 1697L3218 1699Z";

const Dim = ({ x, a, b, y0 }) => (
  <g stroke="#000">
    <path d={`M${x} ${y0}V776M${x - 22} ${a}h52M${x - 22} ${b}h52`} strokeWidth="2" />
    <path d={`M${x - 23} ${a - 26}l48 52M${x - 23} ${b - 26}l48 52`} strokeWidth="8" />
  </g>
);
const RED = "#ff1a00";
const PINK = "#ff9c8f";
const Riser = ({ x, top, cap, end }) => (
  <g>
    <path d={`M${x - 10} ${end}V${top + 12}Q${x - 9} ${top} ${x} ${top}Q${x + 9} ${top} ${x + 10} ${top + 12}V${end}Z`} fill={RED} />
    <path d={`M${x - 3} ${cap}V${end - 10}M${x + 3} ${cap}V${end - 10}`} stroke={PINK} strokeWidth="2.500" />
  </g>
);
const Node = ({ x }) => (
  <g><rect x={x - 7} y="739" width="14" height="15" fill="#fff" stroke="#003cbe" strokeWidth="1.500" /><path d={`M${x} 741V752M${x - 5} 746.500H${x + 5}`} stroke="#003cbe" strokeWidth="4" /></g>
);

function Drawing() {
  return (
    <svg width="2844" height="1729" viewBox="386 255 2844 1729" fill="none" className="block shrink-0 bg-[#fefefe]">
      <path d="M386 502.500H3230M386 1901.500H3230" stroke="#000" strokeWidth="1.200" />
      {[[820, 570, 0.7653, UP_A], [1980, 570, 0.8163, UP_B], [820, 1640, 1.148, LOW]].map(([x, y, k, d]) => (
        <g key={x + y} transform={`translate(${x} ${y}) scale(${k} .33333)`} stroke="#777"><path d={d} vectorEffect="non-scaling-stroke" strokeWidth="1.500" /></g>
      ))}
      <path d={FAR} stroke="#777" strokeWidth="1.500" />
      <g stroke="#7a7a7a" strokeWidth="8" strokeLinejoin="round">
        <path d="M843 661V601H3230M987 658H1832.500V718H2499V654H3230" />
        <path d="M843 1733V1673H881V1682H1568V1673H3230M982 1730H1832.500V1844H2498V1725H3230" />
        <path d="M847 611H3230M847 1682H878M1571 1682H3230" strokeWidth="2" />
      </g>
      <g stroke="#ff8cff" strokeWidth="8" strokeLinejoin="round">
        <path d="M846 662V768H989V659M843 1733V1839H985V1734" strokeWidth="7.500" />
      </g>
      {[601, 1672].map((y) => <path key={y} d={`M386 ${y}H537M651 ${y}H1028M1140 ${y}H1291M1405 ${y}H1784M1897 ${y}H2047M2161 ${y}H2540M2652 ${y}H2804M2917 ${y}H3230`} stroke="#000" strokeWidth="2" />)}

      {/* branch pipe */}
      <g>
        <path d="M1045 675H1657V699H1045Z" fill={RED} />
        <path d="M1045 683.500H1657M1045 690.500H1657" stroke={PINK} strokeWidth="5" />
        <path d="M998 682Q1005 676 1012 677V697Q1005 698 998 692Z" fill={RED} />
        <path d="M1006 680L1017 671L1029 680V694L1017 702L1006 694Z" fill={RED} />
        <rect x="1027" y="672" width="18" height="30" rx="4" fill={RED} />
        <ellipse cx="1307" cy="687" rx="9" ry="9" fill={RED} />
        <path d="M1664 687Q1684 687 1684 708V730Q1684 746 1703 748" stroke={RED} strokeWidth="24" />
        <path d="M1672 686Q1680 690 1680 704V718M1677 682Q1688 690 1688 704V718M1683 738Q1684 748 1694 752M1688 738Q1690 744 1696 746" stroke={PINK} strokeWidth="3" />
        <path d="M1657 680L1666 667L1674 680V700L1666 706L1657 700Z" fill={RED} />
        <ellipse cx="1684" cy="728" rx="19" ry="9" fill={RED} />
        <path d="M1690 732Q1708 730 1711 740V756L1703 766L1694 756Z" fill={RED} />
      </g>
      <Riser x={1805} top={672} cap={698} end={736} />
      <Riser x={2728} top={658} cap={680} end={736} />
      <path d="M3219 695H3230V734H3219ZM3202 732H3219V761H3202ZM3219 734H3230V759H3219Z" fill={RED} />
      <path d="M3225 718V730M3219 742H3230M3219 751H3230" stroke={PINK} strokeWidth="3" />

      {/* selected main pipe */}
      <path d="M1711 734H3202V759H1711Z" fill="#003cbe" />
      <path d="M1711 742.500H3202M1711 751.500H3202" stroke="#7a9dea" strokeWidth="4" />
      <path d="M1711 746.500H3202" stroke="#a9c2f5" strokeWidth="1" />
      <path d="M1796 734H1815L1811 753H1800Z" fill="#6a2080" opacity=".7" />
      <path d="M1805 738L1810 746H1800ZM1803 746H1807V754H1803Z" fill={RED} />
      <path d="M2717 734H2739L2736 743H2720Z" fill="#5a2f90" />
      <circle cx="2728" cy="741" r="6.500" fill={RED} />
      <Node x={1703} />
      <Node x={3210} />

      {/* level grid line, repeated long and short dashes */}
      <path d="M2166 255V437M2166 512V588M2166 663V966M2166 1041V1117M2166 1192V1495M2166 1571V1647M2166 1722V1984" stroke="#000" strokeWidth="2" />

      <Dim x={1737} a={658} b={746} y0={629} />
      <Dim x={2033} a={717} b={746} y0={689} />
      <Dim x={2600} a={653} b={746} y0={625} />
      <path d="M1740 703Q1758 704 1772 721Q1789 742 1791 775M2034 733Q2058 734 2072 744Q2088 757 2090 778M2601 701Q2627 700 2646 719Q2672 747 2678 799" stroke="#000" strokeWidth="2" />
      <g fill="#0a3fa8" fontFamily="'Liberation Sans', sans-serif" fontSize="27">
        <text x="1659" y="715">3890.0</text>
        <text x="2411" y="734">6326.9</text>
        <text x="3164" y="715">3890.0</text>
        <text transform="translate(1815 827) rotate(-90) scale(.86 1.17)">370</text>
        <text transform="translate(2115 829) rotate(-90) scale(.86 1.17)">120</text>
        <text transform="translate(2703 851) rotate(-90) scale(.86 1.17)">390</text>
      </g>
    </svg>
  );
}

function NavBar() {
  return (
    <div className="absolute top-[28px] right-[27px] flex h-[118px] w-[36px] flex-col items-center rounded-md border-2 border-[#bdbdbd] bg-[#f1f1f1]">
      <svg width="32" height="114" viewBox="0 0 32 114" fill="none" stroke="#a5a5a5" strokeWidth="1.500">
        <circle cx="26" cy="6" r="3.500" /><path d="M24.500 4.500L27.500 7.500M27.500 4.500L24.500 7.500" />
        <rect x="5" y="21" width="18" height="19" rx="7" /><circle cx="14" cy="30" r="5" />
        <text x="17" y="44" fontSize="10" fill="#7d9fd6" stroke="none" fontWeight="bold">2D</text>
        <path d="M13 50H20L16.500 54Z M13 92H20L16.500 96Z" fill="#999" stroke="none" /><path d="M3 57H30" />
        <rect x="9" y="66" width="11" height="11" fill="#a9cf9f" /><circle cx="19" cy="76" r="4" fill="#fff" /><path d="M22 79L25 82" />
        <circle cx="26" cy="108" r="3.500" /><path d="M24.500 108H27.500" />
      </svg>
    </div>
  );
}

const V = ({ w = "w-[32px]", children }) => <div className={"flex justify-center " + w}>{children}</div>;
function ViewWindow() {
  return (
    <div className="relative mr-[5px] ml-[5px] flex w-[2872px] shrink-0 flex-col border-t-2 border-l border-[#6b6b6b] bg-[#efefef]">
      <div className="flex h-[1729px]">
        <Drawing />
        <div className="flex w-[25px] flex-col items-center justify-between bg-[#efefef] py-[10px]">
          <svg width="12" height="9" fill="none" stroke="#444" strokeWidth="2.500"><path d="M1 8L6 2L11 8" /></svg>
          <svg width="12" height="9" fill="none" stroke="#444" strokeWidth="2.500"><path d="M1 1L6 7L11 1" /></svg>
        </div>
        <div className="w-[2px] bg-white" />
      </div>
      <div className="absolute top-[851px] right-[2px] h-[26px] w-[24px] bg-[#cccccc]" />
      <div className="absolute top-[8px] right-[30px] flex items-center gap-[6px]">
        <svg width="12" height="12"><rect x="0.500" y="6.500" width="11" height="4" fill="none" stroke="#333" /></svg>
        <svg width="12" height="12" fill="none" stroke="#333"><path d="M3 3V0.500H11V9H9M0.500 3H9V11.500H0.500ZM3 6H6V9H3Z" /></svg>
        <svg width="12" height="12" fill="none" stroke="#333"><path d="M1 1H4L6 4L8 1H11L7.500 6L11 11H8L6 8L4 11H1L4.500 6Z" /></svg>
      </div>
      <NavBar />
      <div className="flex h-[26px] items-center pl-[35px] text-[17px] text-[#222]">
        <span className="w-[80px] tracking-[-0.1px]">1 : 100</span>
        <V><Svg w={16} h={16}><path d="M1 1H23V23H1Z" fill="#ccc" /><path d="M1 7H23M1 12H23M1 17H23M7 1V23M12 1V23M17 1V23" strokeDasharray="2 2" /></Svg></V>
        <V><Svg w={16} h={16}><Cube x={2} y={2} k={1.050} /></Svg></V>
        <V><Svg w={18} h={18}><circle cx="10" cy="10" r="6" fill="#ffd24a" stroke="#e08a1c" strokeWidth="2.500" /><path d="M14 14L23 23M23 14L14 23" stroke="#d9331c" strokeWidth="3" /></Svg></V>
        <V><Svg w={16} h={16}><circle cx="10" cy="8" r="6" stroke="#c2c2c2" strokeWidth="2" strokeDasharray="2 1" /><path d="M3 20H12M14 14L22 22M22 14L14 22" stroke="#c2c2c2" strokeWidth="2" /></Svg></V>
        <V><Svg w={17} h={17}><path d="M6 22V6H22M2 18H16V8" stroke="#2372c4" strokeWidth="3" /><path d="M10 14H18" stroke="#d9331c" strokeWidth="2.500" /></Svg></V>
        <V><Svg w={17} h={17}><path d="M6 22V6H16M2 18H12V8" stroke="#2372c4" strokeWidth="3" /><circle cx="18" cy="9" r="4" fill="#ffd24a" stroke="#e08a1c" strokeWidth="2" /><path d="M18 14V22" strokeWidth="3" /></Svg></V>
        <V><Svg w={16} h={16}><circle cx="6" cy="16" r="4" strokeWidth="2" /><circle cx="17" cy="14" r="4" strokeWidth="2" /><path d="M2 14L4 5M21 12L22 3M10 15H13" strokeWidth="2" /></Svg></V>
        <V><Svg w={16} h={16}><circle cx="12" cy="9" r="5" fill="#d4e9fa" stroke={B} strokeWidth="2" /><path d="M12 15V22" stroke="#357" strokeWidth="3" /></Svg></V>
        <V><Svg w={16} h={16}><path d="M3 3H20V20H3Z" strokeWidth="3" strokeDasharray="4 2" stroke="#222" /><path d="M12 13H20V21H12Z" fill="#666" /></Svg></V>
        <V><Svg w={17} h={17}><path d="M2 22V12L9 5L22 8V20M9 5V20M2 14H15M14 13V22" stroke="#aaa" strokeWidth="2" /></Svg></V>
        <V><Svg w={17} h={17}><path d="M2 1V23M22 1V12M2 5H22M6 2L2 5L6 8M18 2L22 5L18 8" strokeWidth="2" /><path d="M12 14H22V23H12Z" fill="#666" /></Svg></V>
        <V w="w-[24px]"><svg width="7" height="11" fill="none" stroke="#444" strokeWidth="2.500"><path d="M6 1L1.500 5.500L6 10" /></svg></V>
        <div className="ml-[1151px] h-[24px] w-[26px] bg-[#cccccc]" />
        <svg className="ml-[1158px]" width="7" height="11" fill="none" stroke="#444" strokeWidth="2.500"><path d="M1 1L5.500 5.500L1 10" /></svg>
        <svg className="mt-2 ml-[24px]" width="14" height="14" fill="#bbb"><path d="M10 0h3v3h-3zM5 5h3v3h-3zM10 5h3v3h-3zM0 10h3v3h-3zM5 10h3v3h-3zM10 10h3v3h-3z" /></svg>
      </div>
      <div className="h-px bg-white" />
    </div>
  );
}

/* ---------- properties palette ---------- */
const PROPS = [
  ["g", "Constraints", 1], ["Horizontal Justification", "Center"], ["Vertical Justification", "Middle"], ["Reference Level", "LEVEL 05"], ["Offset", "3890.0"],
  ["Start Offset", "3890.0", "d"], ["End Offset", "3890.0", "d"], ["Slope", "0.0000%", "d"],
  ["g", "Construction"], ["g", "Mechanical"], ["g", "Mechanical - Flow"], ["g", "Dimensions"], ["g", "Identity Data"], ["g", "Phasing"], ["g", "Fire Protection", 1],
  ["Pipe No Listing", ""], ["Start Pap", "G"], ["End Pap", "G"],
  ["1_RUN DIM", "430"], ["1_PAP", "40U , 32A"], ["2_RUN DIM", "4300"], ["2_PAP", "50U"],
  ["3_RUN DIM", ""], ["3_PAP", ""], ["4_RUN DIM", ""], ["4_PAP", ""], ["5_RUN DIM", ""], ["5_PAP", ""], ["6_RUN DIM", ""], ["6_PAP", ""],
  ["7_RUN DIM", ""], ["7_PAP", ""], ["8_RUN DIM", ""], ["8_PAP", ""], ["9_RUN DIM", ""], ["9_PAP", ""],
  ["Level (Listing)", ""], ["Part (Listing)", ""], ["Riser Dropper Tag", ""], ["Beam-Slab Offset", "120S"], ["Beam-Slab Offset All", "370S,120S,390S"], ["AFL from Structural Floor", ""],
  ["g", "Insulation"],
];
function PropRow({ r, n }) {
  if (r[0] === "g")
    return (
      <div className="flex h-[30px] items-center justify-between bg-[#dadada] pr-[6px] pl-[2px]">
        <span className="pt-[2px] tracking-[-0.2px]">{r[1]}</span>
        <svg width="6" height="9" viewBox="0 0 6 9" fill="none" stroke="#000" strokeWidth="1.500" className="mb-[14px]">{r[2] ? <path d="M0.500 4L3 1L5.500 4M0.500 8L3 5L5.500 8" /> : <path d="M0.500 1L3 4L5.500 1M0.500 5L3 8L5.500 5" />}</svg>
      </div>
    );
  return (
    <div className={"flex h-[30px] border-b border-dotted border-[#777] " + (r[2] ? "text-[#808080]" : "")}>
      <div className="flex w-[273px] items-center pb-px pl-[12px]">{r[0]}</div>
      <div className={"flex w-[273px] items-center pb-px " + (n === 1 ? "border border-black pl-[2px]" : "border-x border-dotted border-[#777] pl-[2px]")}>{r[1]}</div>
      <div className="flex-1 border-r border-dotted border-[#777]" />
    </div>
  );
}
function Properties() {
  return (
    <div className="flex h-full w-[560px] shrink-0 flex-col bg-[#f0f0f0] text-[17px] tracking-[-0.02px] text-[#161616]">
      <div className="flex h-[31px] items-center justify-between bg-[#bccbdc] pr-[4px] pl-1 tracking-[-0.3px]"><span>Properties</span><Close s={13} /></div>
      <div className="mt-[2px] flex flex-1 flex-col border-t-2 border-l-2 border-[#6a6a6a]">
        <div className="flex h-[105px] shrink-0 items-center bg-linear-to-b from-[#fdfdfd] to-[#ebebeb] pr-[2px] pl-[5px]">
          <div className="h-[98px] w-[98px] border border-[#c8c8c8] bg-white">
            <svg width="96" height="96" viewBox="0 0 96 96">
              <defs><linearGradient id="pipe" x1="0.600" y1="0" x2="0.300" y2="1"><stop offset="0" stopColor="#555" /><stop offset=".45" stopColor="#8c8c8c" /><stop offset="1" stopColor="#4a4a4a" /></linearGradient></defs>
              <path d="M24 8L85 44L70 86L4 48Q-2 38 4 24Q12 8 24 8Z" fill="url(#pipe)" />
              <ellipse cx="79" cy="65" rx="14" ry="22" transform="rotate(20 79 65)" fill="#3d3d3d" />
            </svg>
          </div>
          <div className="flex-1 pl-[7px] leading-[24px] tracking-[-0.2px] text-[#4b4b4b]"><div>Pipe Types</div><div>3DFIRE_TAP</div></div>
          <svg width="11" height="7"><path d="M0 0H11L5.500 7Z" fill="#333" /></svg>
        </div>
        <div className="flex h-[34px] shrink-0 items-center">
          <div className="flex h-[34px] w-[450px] items-center justify-between border border-[#a6a6a6] bg-[#e0e0e0] pr-[7px] pl-[4px]">Pipes (1)<Chevron /></div>
          <div className="flex flex-1 items-center justify-center gap-[5px] pb-[2px] tracking-[-0.2px] whitespace-nowrap">
            <svg width="17" height="17" viewBox="0 0 17 17" fill="#eee" stroke="#4b4f57"><path d="M0.500 2L2 0.500H8V7.500H0.500ZM9 2L10 0.500H15.500V7.500H9ZM0.500 9H7V15.500H0.500Z" /><path d="M9 7H16.500V16.500H9Z" /><path d="M10.500 8.500H14V11H10.500Z" fill="#2d62ab" stroke="none" /></svg>
            <span>Edit Type</span>
          </div>
        </div>
        <div className="flex-1 bg-[#fefefe]">{PROPS.map((r, n) => <PropRow key={n} r={r} n={n} />)}</div>
        <div className="flex h-[36px] shrink-0 items-center justify-between pr-[3px] pl-[2px]">
          <span className="pt-[6px] tracking-[-0.2px] text-[#0a62b8]">Properties help</span>
          <div className="flex h-[31px] w-[110px] items-center justify-center border-2 border-[#bcbcbc] bg-[#cacaca] text-[#8b8b8b]">Apply</div>
        </div>
      </div>
      <div className="h-px" />
    </div>
  );
}

/* ---------- status bar ---------- */
const G = ({ w, children }) => <div className={"flex h-full shrink-0 items-center justify-center border-l border-[#ededed] bg-[#d6d6d6] " + w}>{children}</div>;
const Cur = ({ children }) => <Svg w={18} h={20}>{children}<path d="M12 9V21L15 18L18 23L20 22L18 17H22Z" fill="#fff" /></Svg>;
function StatusBar() {
  return (
    <div className="flex h-[37px] shrink-0 items-center border-t-2 border-[#858585] bg-linear-to-b from-[#e6e6e6] to-[#c2c2c2] pl-[2px] text-[17px] tracking-[-0.02px] text-[#111]">
      <span className="w-[2521px]">Click to select, TAB for alternates, CTRL adds, SHIFT unselects.</span>
      <G w="w-[34px]"><Svg w={18} h={20}><path d="M4 12V22M8 8V22M12 3V22M16 8V22M20 12V22M2 14H22" stroke="#a2a2a2" strokeWidth="2" /></Svg></G>
      <div className="ml-px flex h-full w-[307px] items-center justify-end border-2 border-[#cfcfcf] bg-[#fdfdfd] pr-[6px]"><Chevron color="#aaa" /></div>
      <G w="w-[67px]"><Svg w={17} h={20}><path d="M8 2H22V8H16L12 22H2L8 12Z" fill="#aaa" stroke="#999" /></Svg><span className="pt-1 pl-[5px]">:0</span></G>
      <G w="w-[34px]"><Svg w={18} h={20}><path d="M3 2H21V22H3Z" fill="#eee" strokeWidth="2" /><path d="M3 5H21" strokeWidth="4" /><path d="M7 10V18H12M7 12H12M14 12H18M14 18H18" strokeWidth="1.500" /></Svg></G>
      <G w="w-[34px]"><Svg w={17} h={20}><path d="M3 2H21V22H3Z" fill="#999" stroke="#8a8a8a" /><path d="M3 15H10M10 12L14 16L10 20" stroke="#eee" strokeWidth="2" /></Svg></G>
      <div className="flex h-full w-[233px] items-center justify-between border-2 border-[#cfcfcf] bg-[#fdfdfd] pr-[6px] pl-[2px] text-[17.500px] text-[#888]">Main Model<Chevron color="#aaa" /></div>
      <div className="w-[259px]" />
      <G w="w-[34px]"><Cur><ellipse cx="7" cy="7" rx="5" ry="4" stroke="#e0a21e" strokeWidth="3" /><ellipse cx="16" cy="7" rx="5" ry="4" stroke="#c98812" strokeWidth="3" /></Cur></G>
      <G w="w-[34px]"><Cur><path d="M10 4L4 10H12L4 16V20H12" stroke="#2372c4" strokeWidth="2" /><path d="M14 1L21 8M21 1L14 8" stroke="#d9331c" strokeWidth="3" /></Cur></G>
      <G w="w-[34px]"><Cur><path d="M4 2H15V6L13 10L16 14H3L6 10L4 6Z" fill="#f7a15a" stroke="#c95f1a" /></Cur></G>
      <G w="w-[34px]"><Cur><path d="M6 6L16 2V16L6 21Z" fill={LB} stroke={B} strokeWidth="2" /></Cur></G>
      <G w="w-[34px]"><Cur><path d="M8 1V15M1 8H15M6 3L8 1L10 3M3 6L1 8L3 10" strokeWidth="2" /></Cur></G>
      <G w="w-[24px]"><Svg w={16} h={18}><circle cx="12" cy="12" r="8" stroke="#aaa" strokeWidth="5" strokeDasharray="5 1.500" /></Svg></G>
      <div className="flex h-full w-[106px] items-center pl-[3px]"><Svg w={17} h={20}><path d="M2 2H22V6L14 13V22H10V13L2 6Z" fill="#c9ccd2" strokeWidth="2" /></Svg><span className="pt-3">:1</span></div>
      <svg className="mt-4" width="14" height="14" fill="#b0b0b0"><path d="M10 0h3v3h-3zM5 5h3v3h-3zM10 5h3v3h-3zM0 10h3v3h-3zM5 10h3v3h-3zM10 10h3v3h-3z" /></svg>
    </div>
  );
}

/* ---------- callout arrows over the window ---------- */
const LINKS = [[1815, 847, 3523, 1636], [2146, 824, 3589, 1625], [2712, 851, 3635, 1626]];
function Callouts() {
  return (
    <svg width="3824" height="2052" viewBox="0 0 3824 2052" className="pointer-events-none absolute top-0 left-0">
      {LINKS.map(([a, b, c, d]) => {
        const t = (Math.atan2(d - b, c - a) * 180) / Math.PI;
        return (
          <g key={a}>
            <path d={`M${a} ${b}L${c - 12 * Math.cos((t * Math.PI) / 180)} ${d - 12 * Math.sin((t * Math.PI) / 180)}`} stroke="#0010ff" strokeWidth="4" />
            <path d="M0 0L-25 -8V8Z" fill="#0010ff" transform={`translate(${c} ${d}) rotate(${t})`} />
          </g>
        );
      })}
    </svg>
  );
}

export default function App() {
  return (
    <div className="relative flex h-[2052px] w-[3824px] flex-col overflow-hidden border-b-4 border-l-2 border-[#04152f] bg-[#f0f0f0] font-['Open_Sans','Noto_Sans',sans-serif]">
      <TitleBar />
      <Tabs />
      <Ribbon />
      <OptionsBar />
      <div className="flex h-[1758px] shrink-0">
        <Browser />
        <ViewWindow />
        <Properties />
      </div>
      <StatusBar />
      <div className="absolute top-0 left-[-2px]"><Logo /><Callouts /></div>
    </div>
  );
}
